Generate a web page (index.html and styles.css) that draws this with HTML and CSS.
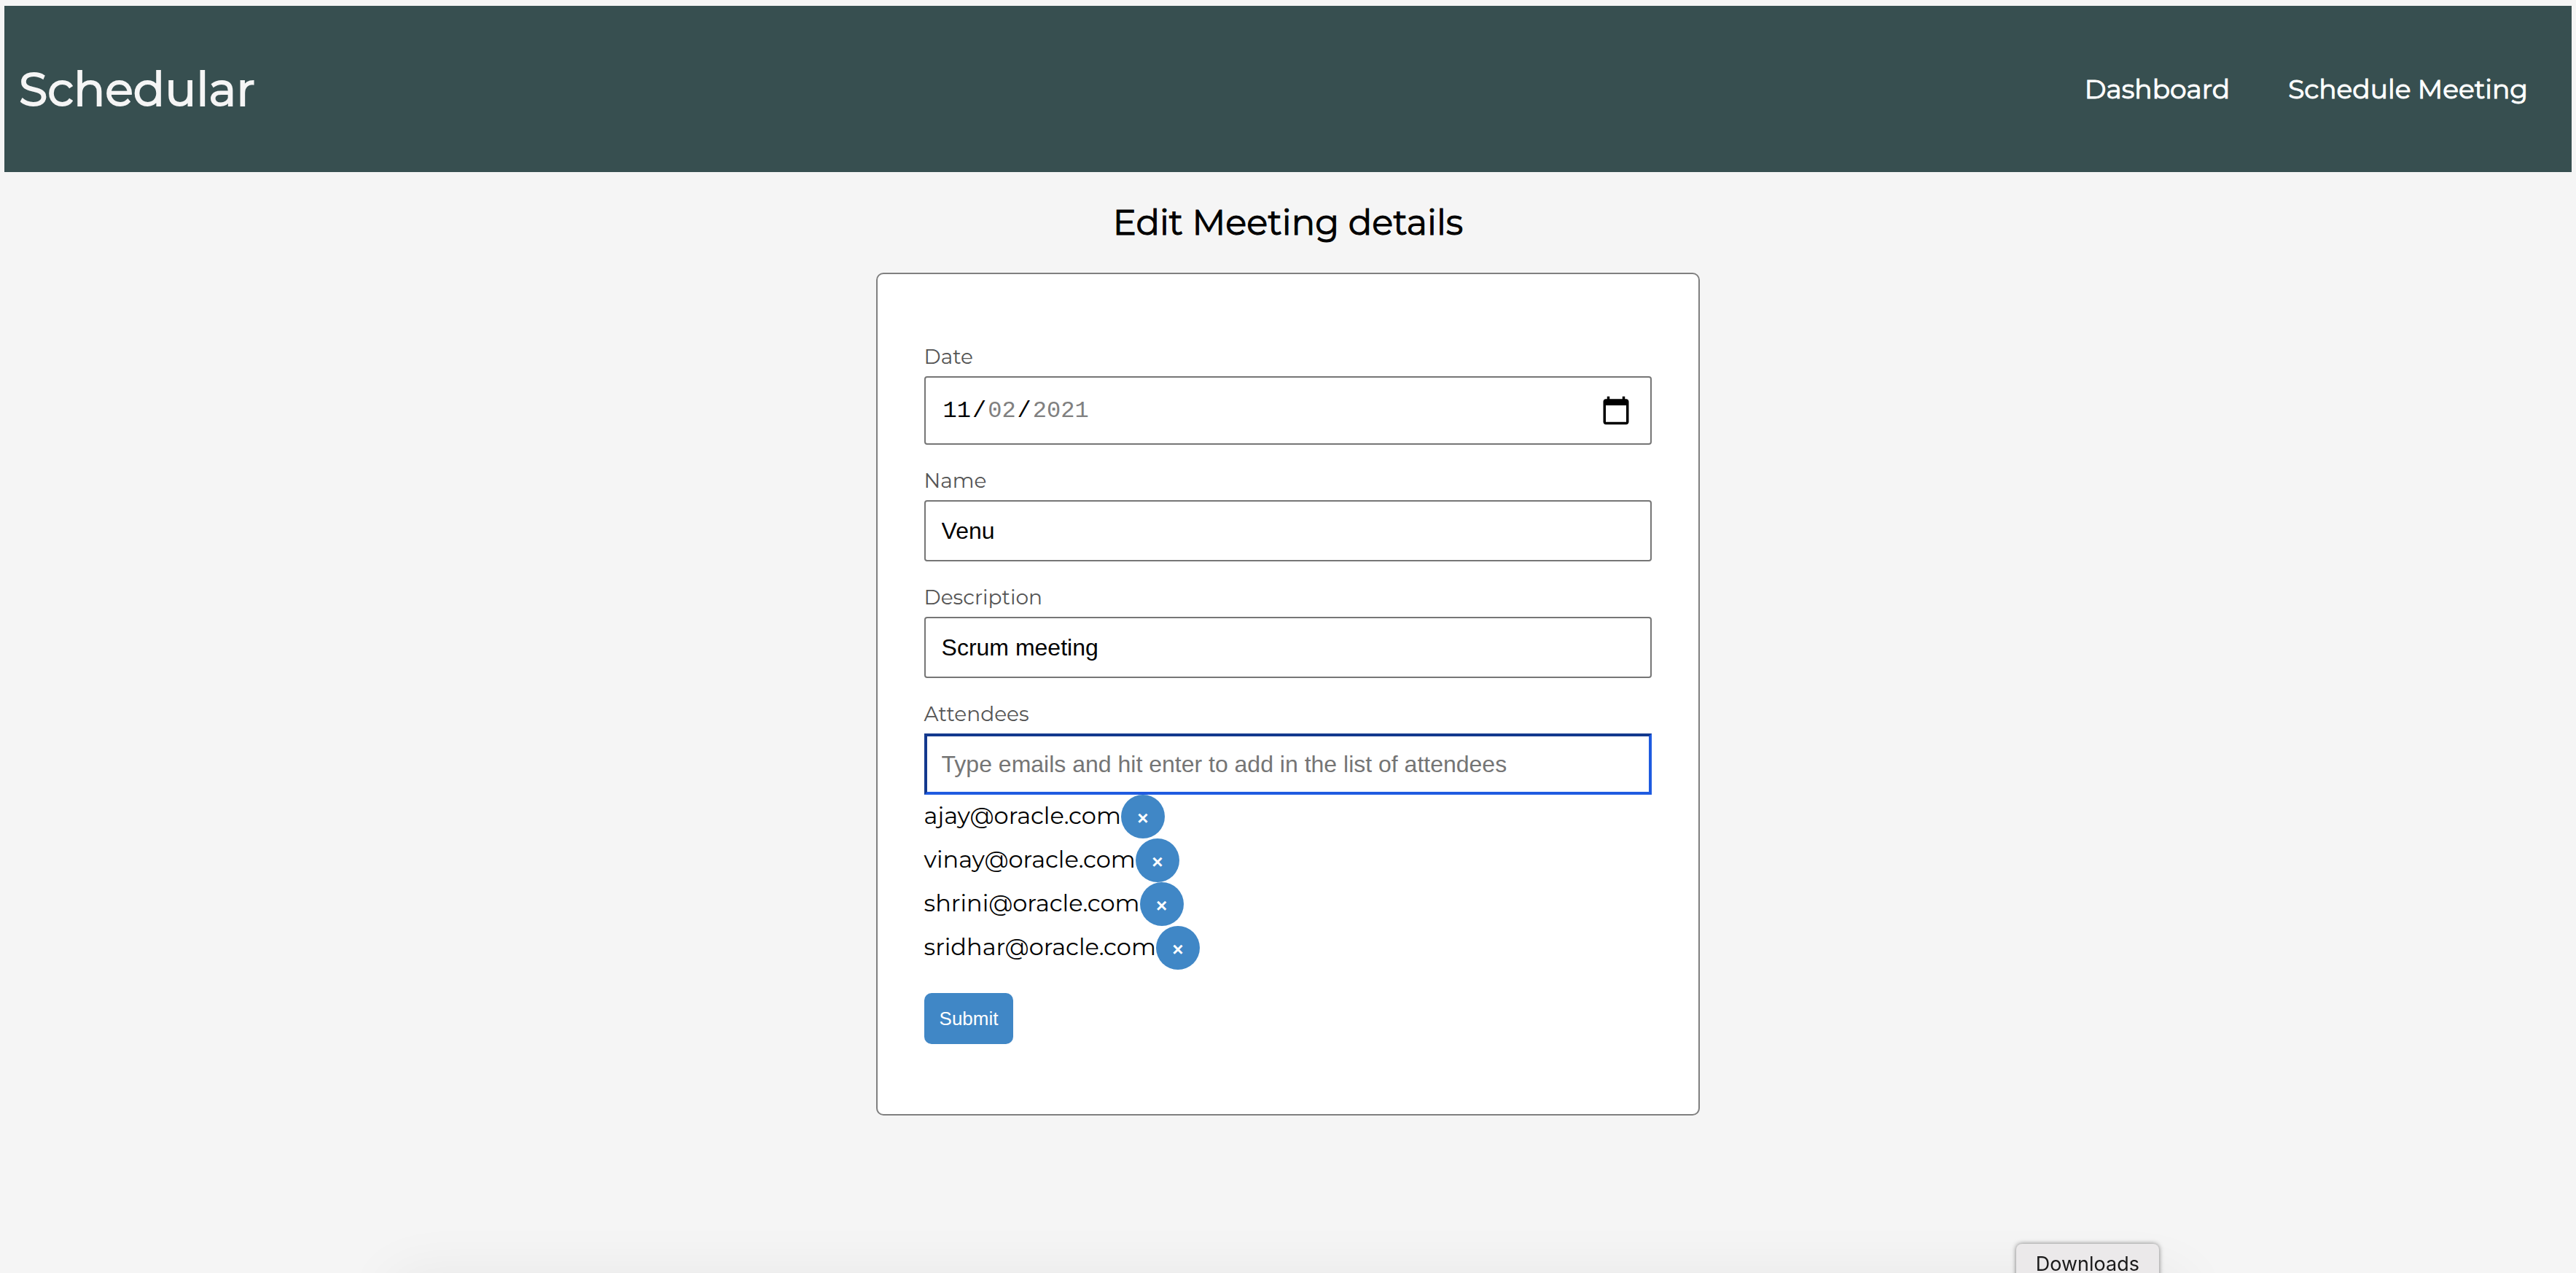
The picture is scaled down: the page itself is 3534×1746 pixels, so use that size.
FILE: index.html
```html
<!DOCTYPE html>
<html lang="en-US">
<head>
<meta charset="utf-8">
<title>Schedular</title>
<link rel="stylesheet" href="styles.css">
</head>
<body>
<header class="header">
  <div class="brand">Schedular</div>
  <nav class="nav">
    <a class="nav-link" href="#dashboard">Dashboard</a>
    <a class="nav-link" href="#schedule">Schedule Meeting</a>
  </nav>
</header>
<main class="main">
  <h1 class="title">Edit Meeting details</h1>
  <form class="card">
    <div class="field">
      <label class="label" for="date">Date</label>
      <input class="input input-date" id="date" type="date" value="2021-11-02">
    </div>
    <div class="field">
      <label class="label" for="name">Name</label>
      <input class="input" id="name" type="text" value="Venu">
    </div>
    <div class="field">
      <label class="label" for="description">Description</label>
      <input class="input" id="description" type="text" value="Scrum meeting">
    </div>
    <div class="field">
      <label class="label" for="attendees">Attendees</label>
      <input class="input input-active" id="attendees" type="text" placeholder="Type emails and hit enter to add in the list of attendees">
      <ul class="attendees">
        <li class="attendee"><span class="email">ajay@oracle.com</span><button class="remove" type="button">×</button></li>
        <li class="attendee"><span class="email">vinay@oracle.com</span><button class="remove" type="button">×</button></li>
        <li class="attendee"><span class="email">shrini@oracle.com</span><button class="remove" type="button">×</button></li>
        <li class="attendee"><span class="email">sridhar@oracle.com</span><button class="remove" type="button">×</button></li>
      </ul>
    </div>
    <button class="submit" type="submit">Submit</button>
  </form>
</main>
<div class="dock-shadow"></div>
<div class="tooltip">Downloads</div>
</body>
</html>
```
FILE: styles.css
```css
* {
  box-sizing: border-box;
}

body {
  margin: 8px 6px;
  background: #f5f5f5;
  color: #000;
  font-family: Montserrat, Inter, sans-serif;
  font-size: 32px;
}

.header {
  display: flex;
  align-items: center;
  justify-content: space-between;
  padding: 72px 60px 72px 20px;
  background: #374f50;
}

.brand {
  color: #f5f5f5;
  font-size: 64px;
  line-height: 84px;
  -webkit-text-stroke: 2px currentColor;
}

.nav {
  display: flex;
  gap: 80px;
}

.nav-link {
  color: #fff;
  font-size: 36px;
  line-height: 48px;
  text-decoration: none;
  -webkit-text-stroke: 1px currentColor;
}

.main {
  display: flex;
  flex-direction: column;
  align-items: center;
}

.title {
  margin: 40px 0;
  font-size: 48px;
  font-weight: 400;
  line-height: 58px;
  -webkit-text-stroke: 1px currentColor;
}

.card {
  display: flex;
  flex-direction: column;
  align-items: flex-start;
  gap: 32px;
  width: 32vw;
  min-width: 640px;
  padding: 96px 64px;
  background: #fff;
  border: 2px solid #808080;
  border-radius: 10px;
}

.field {
  display: flex;
  flex-direction: column;
  width: 100%;
}

.label {
  margin-bottom: 10px;
  color: #555;
  font-size: 28px;
  line-height: 34px;
}

.input {
  width: 100%;
  height: 84px;
  padding: 20px 22px;
  background: #fff;
  border: 2px solid #767676;
  border-radius: 4px;
  color: #000;
  font-family: "Liberation Sans", Arial, sans-serif;
  font-size: 32px;
  outline: none;
}

.input::placeholder {
  color: #757575;
}

.input-date {
  height: 94px;
  font-family: "Liberation Mono", monospace;
}

.input-date::-webkit-datetime-edit-fields-wrapper {
  padding: 0;
}

.input-date::-webkit-datetime-edit-month-field,
.input-date::-webkit-datetime-edit-day-field,
.input-date::-webkit-datetime-edit-year-field {
  padding: 0 2px;
}

.input-date::-webkit-datetime-edit-day-field,
.input-date::-webkit-datetime-edit-year-field {
  color: #808080;
}

.input-date::-webkit-calendar-picker-indicator {
  width: 42px;
  height: 42px;
  margin-right: 4px;
  padding: 0;
  background-size: 42px 42px;
}

.input-active {
  padding: 18px 20px;
  border: 4px solid;
  border-color: #13398e #1f5be0 #1f5be0 #13398e;
  border-radius: 0;
}

.attendees {
  margin: 0;
  padding: 0;
  list-style: none;
}

.attendee {
  display: flex;
  align-items: center;
}

.email {
  padding-bottom: 4px;
}

.remove,
.submit {
  background: #4087c6;
  border: 0;
  color: #fff;
  font-family: "Liberation Sans", Arial, sans-serif;
  font-size: 26px;
  line-height: 30px;
}

.remove {
  width: 60px;
  height: 60px;
  padding: 4px 0 0;
  border-radius: 50%;
  font-weight: 700;
}

.submit {
  padding: 20px 21px;
  border-radius: 10px;
}

/* Soft shade and label that rise over the bottom edge of the window */
.dock-shadow {
  position: fixed;
  top: 100%;
  right: 15%;
  left: 15%;
  height: 80px;
  border-radius: 40px;
  box-shadow: 0 0 80px rgba(0, 0, 0, 0.06);
}

.tooltip {
  position: fixed;
  right: 572px;
  bottom: -16px;
  padding: 10px 27px;
  background: #ebe9ea;
  border-radius: 8px;
  box-shadow: 0 0 6px rgba(0, 0, 0, 0.5);
  color: #1a1a1a;
  font-family: Inter, sans-serif;
  font-size: 27px;
  line-height: 36px;
}
```
